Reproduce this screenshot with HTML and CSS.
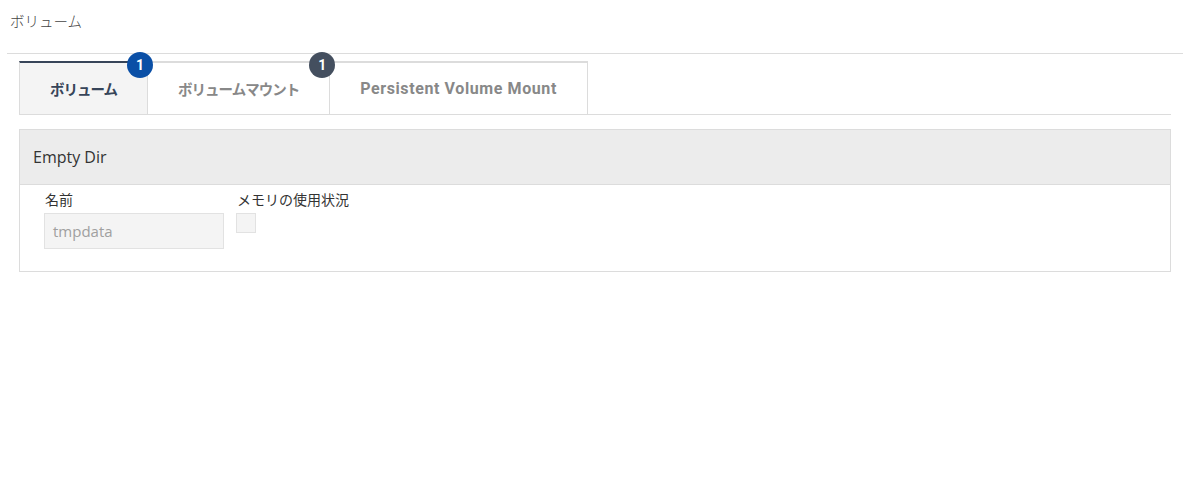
FILE: index.html
```html
<!DOCTYPE html>
<html lang="ja">
<head>
<meta charset="utf-8">
<link rel="stylesheet" href="styles.css">
</head>
<body>
<div class="page">
  <div class="page-title">ボリューム</div>
  <div class="content">
    <ul class="tabs">
      <li class="tab active">ボリューム<span class="badge badge-blue">1</span></li>
      <li class="tab">ボリュームマウント<span class="badge badge-dark">1</span></li>
      <li class="tab tab-latin">Persistent Volume Mount</li>
    </ul>
    <div class="panel">
      <div class="panel-head">Empty Dir</div>
      <div class="panel-body">
        <div class="field field-name">
          <div class="label">名前</div>
          <div class="input">tmpdata</div>
        </div>
        <div class="field">
          <div class="label">メモリの使用状況</div>
          <div class="checkbox"></div>
        </div>
      </div>
    </div>
  </div>
</div>
</body>
</html>
```
FILE: styles.css
```css
* { box-sizing: border-box; }
html, body { margin: 0; padding: 0; background: #fff; }
body {
  font-family: "Open Sans", "Noto Sans CJK JP", sans-serif;
  color: #333;
}
.page { padding-left: 7px; }
.page-title {
  height: 54px;
  padding: 11px 0 0 3px;
  font-size: 14.5px;
  font-weight: 300;
  line-height: 22px;
  color: #444;
  border-bottom: 1px solid #dcdcdc;
}
.content { margin: 0 12px; padding-top: 7px; }
.tabs {
  list-style: none;
  margin: 0;
  padding: 0;
  display: flex;
  border-bottom: 1px solid #dcdcdc;
}
.tab {
  position: relative;
  height: 53px;
  padding: 0 30px;
  display: flex;
  align-items: center;
  font-family: "Roboto", "Noto Sans CJK JP", sans-serif;
  font-weight: 700;
  font-size: 14.5px;
  letter-spacing: -1px;
  color: #888;
  background: #fff;
  border: 1px solid #dcdcdc;
  border-top: 2px solid #dcdcdc;
  border-bottom: none;
  margin-left: -1px;
}
.tab:first-child { margin-left: 0; }
.tab.active {
  background: #f4f4f4;
  color: #374559;
  border-top-color: #374559;
}
.tab-latin {
  font-size: 16px;
  letter-spacing: 0.6px;
  padding: 0 30px;
}
.badge {
  position: absolute;
  top: -11px;
  right: -6px;
  width: 26px;
  height: 26px;
  border-radius: 50%;
  display: flex;
  align-items: center;
  justify-content: center;
  color: #fff;
  font-family: "Roboto", sans-serif;
  font-size: 14px;
  font-weight: 700;
  letter-spacing: 0;
  z-index: 2;
}
.badge-blue { background: #0a4fa6; }
.badge-dark { background: #444f5f; }
.panel {
  margin-top: 14px;
  border: 1px solid #dcdcdc;
}
.panel-head {
  height: 55px;
  background: #ececec;
  border-bottom: 1px solid #dcdcdc;
  padding-left: 13px;
  display: flex;
  align-items: center;
  font-size: 16px;
  color: #333;
}
.panel-body {
  display: flex;
  gap: 12px;
  padding: 5px 0 22px 24px;
}
.field-name { width: 180px; }
.label {
  font-size: 14px;
  line-height: 20px;
  color: #333;
  padding-left: 1px;
  margin-bottom: 3px;
}
.input {
  height: 36px;
  background: #f4f4f4;
  border: 1px solid #e2e2e2;
  padding-left: 8px;
  display: flex;
  align-items: center;
  font-size: 15px;
  color: #a0a0a0;
}
.checkbox {
  width: 20px;
  height: 20px;
  margin-top: 2px;
  background: #f4f4f4;
  border: 1px solid #e2e2e2;
}
```
